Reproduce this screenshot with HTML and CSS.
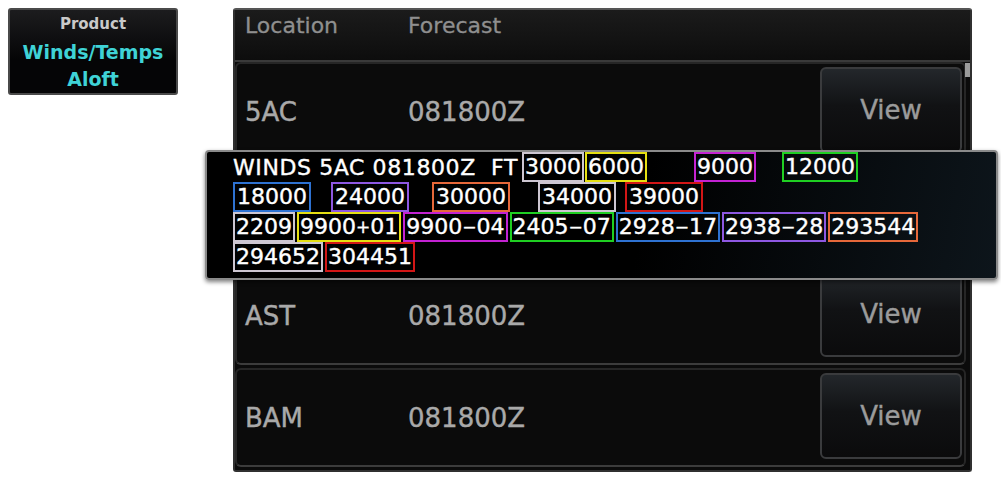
FILE: index.html
```html
<!DOCTYPE html>
<html lang="en">
<head>
    <meta charset="utf-8">
    <title>Winds/Temps Aloft</title>
    <link rel="stylesheet" href="styles.css">
</head>

<body>
    <div class="product">
        <div class="product-label">Product</div>
        <div class="product-name">Winds/Temps<br>Aloft</div>
    </div>

    <main class="panel">
        <div class="head">
            <span class="col-loc">Location</span>
            <span class="col-fc">Forecast</span>
        </div>
        <div class="rows">
            <div class="row">
                <span class="col-loc">5AC</span>
                <span class="col-fc">081800Z</span>
                <button class="view">View</button>
            </div>
            <div class="row">
                <span class="col-loc">AAT</span>
                <span class="col-fc">081800Z</span>
                <button class="view">View</button>
            </div>
            <div class="row">
                <span class="col-loc">AST</span>
                <span class="col-fc">081800Z</span>
                <button class="view">View</button>
            </div>
            <div class="row">
                <span class="col-loc">BAM</span>
                <span class="col-fc">081800Z</span>
                <button class="view">View</button>
            </div>
        </div>
        <div class="thumb"></div>

        <section class="popup">
            <div class="line">
                <span class="title">WINDS 5AC 081800Z  FT</span>
                <span class="box gray gap-4">3000</span>
                <span class="box yellow gap-1">6000</span>
                <span class="box magenta gap-47">9000</span>
                <span class="box green gap-26">12000</span>
            </div>
            <div class="line wide">
                <span class="box blue">18000</span>
                <span class="box purple gap-20">24000</span>
                <span class="box orange gap-23">30000</span>
                <span class="box gray gap-28">34000</span>
                <span class="box red gap-9">39000</span>
            </div>
            <div class="line tight">
                <span class="box gray">2209</span>
                <span class="box yellow">9900<span class="sign">+</span>01</span>
                <span class="box magenta">9900<span class="sign">&minus;</span>04</span>
                <span class="box green">2405<span class="sign">&minus;</span>07</span>
                <span class="box blue">2928<span class="sign">&minus;</span>17</span>
                <span class="box purple">2938<span class="sign">&minus;</span>28</span>
                <span class="box orange">293544</span>
            </div>
            <div class="line tight">
                <span class="box gray">294652</span>
                <span class="box red">304451</span>
            </div>
        </section>
    </main>
</body>

</html>
```

FILE: styles.css
```css
html,
body {
    margin: 0;
    padding: 0;
}

body {
    display: flex;
    align-items: flex-start;
    gap: 55px;
    padding: 8px;
    background: #fff;
    font-family: "DejaVu Sans", Verdana, sans-serif;
}

/* product softkey */

.product {
    box-sizing: border-box;
    width: 170px;
    height: 87px;
    padding-top: 4px;
    text-align: center;
    border: 2px solid #4a4a4a;
    border-radius: 3px;
    background: linear-gradient(#1c1c1e, #050506 60%);
}

.product-label {
    line-height: 20px;
    font-size: 15px;
    font-weight: bold;
    color: #c9c9c9;
}

.product-name {
    margin-top: 5px;
    line-height: 27px;
    font-size: 19px;
    font-weight: bold;
    color: #3fd3d6;
}

/* list panel */

.panel {
    position: relative;
    box-sizing: border-box;
    width: 739px;
    height: 464px;
    border: 2px solid #303030;
    border-top-color: #555;
    border-radius: 3px;
    background: #0b0b0b;
}

.head {
    display: flex;
    height: 52px;
    padding: 2px 0 0 10px;
    box-sizing: border-box;
    line-height: 28px;
    font-size: 22px;
    color: #8f8f8f;
    -webkit-text-stroke: 0.3px #8f8f8f;
    background: linear-gradient(#1b1b1b, #0d0d0d);
    border-bottom: 2px solid #3a3a3a;
}

.col-loc {
    width: 163px;
}

.col-fc {
    flex: 1;
}

.rows {
    display: flex;
    flex-direction: column;
    gap: 3px;
    padding: 0 4px 0 0;
}

.row {
    display: flex;
    align-items: center;
    box-sizing: border-box;
    height: 99px;
    padding: 0 2px 0 8px;
    border: 2px solid #262626;
    border-bottom-color: #3c3c3c;
    border-radius: 6px;
    font-size: 26px;
    color: #a9a9a9;
    -webkit-text-stroke: 0.4px #a9a9a9;
    background: #0b0b0b;
}

.view {
    box-sizing: border-box;
    width: 142px;
    height: 86px;
    margin-top: -4px;
    padding: 0;
    font-family: inherit;
    font-size: 26px;
    color: #9b9b9b;
    -webkit-text-stroke: 0.4px #9b9b9b;
    border: 2px solid #3a3b3d;
    border-radius: 6px;
    background: linear-gradient(#23272b, #111214 45%, #0b0b0c);
}

.thumb {
    position: absolute;
    top: 53px;
    right: 0;
    width: 5px;
    height: 14px;
    background: #9a9a9a;
}

/* decoded report popup */

.popup {
    position: absolute;
    left: -30px;
    top: 140px;
    box-sizing: border-box;
    width: 793px;
    height: 130px;
    padding: 0 0 0 26px;
    border: 2px solid #8a8a8a;
    border-radius: 4px;
    background: linear-gradient(100deg, #000 55%, #0d151b);
    box-shadow: 0 2px 4px rgba(0, 0, 0, 0.5);
    font-size: 22px;
    color: #fff;
    -webkit-text-stroke: 0.4px #fff;
}

.line {
    display: flex;
    align-items: center;
    height: 30px;
}

.line.tight {
    gap: 2px;
}

.title {
    white-space: pre;
    letter-spacing: 0.6px;
}

.box {
    box-sizing: border-box;
    height: 30px;
    padding: 0 1px;
    line-height: 26px;
    white-space: nowrap;
    border: 2px solid;
}

.line.wide .box {
    padding: 0 2px;
}

.sign {
    font-size: 17px;
    vertical-align: 1px;
}

.gray { border-color: #cdc6d1; }
.yellow { border-color: #e6df12; }
.magenta { border-color: #c322d2; }
.green { border-color: #1fcf22; }
.blue { border-color: #2e72d2; }
.purple { border-color: #8e58e2; }
.orange { border-color: #e6683a; }
.red { border-color: #d21616; }

.gap-1 { margin-left: 1px; }
.gap-4 { margin-left: 4px; }
.gap-9 { margin-left: 9px; }
.gap-20 { margin-left: 20px; }
.gap-23 { margin-left: 23px; }
.gap-26 { margin-left: 26px; }
.gap-28 { margin-left: 28px; }
.gap-47 { margin-left: 47px; }
```
